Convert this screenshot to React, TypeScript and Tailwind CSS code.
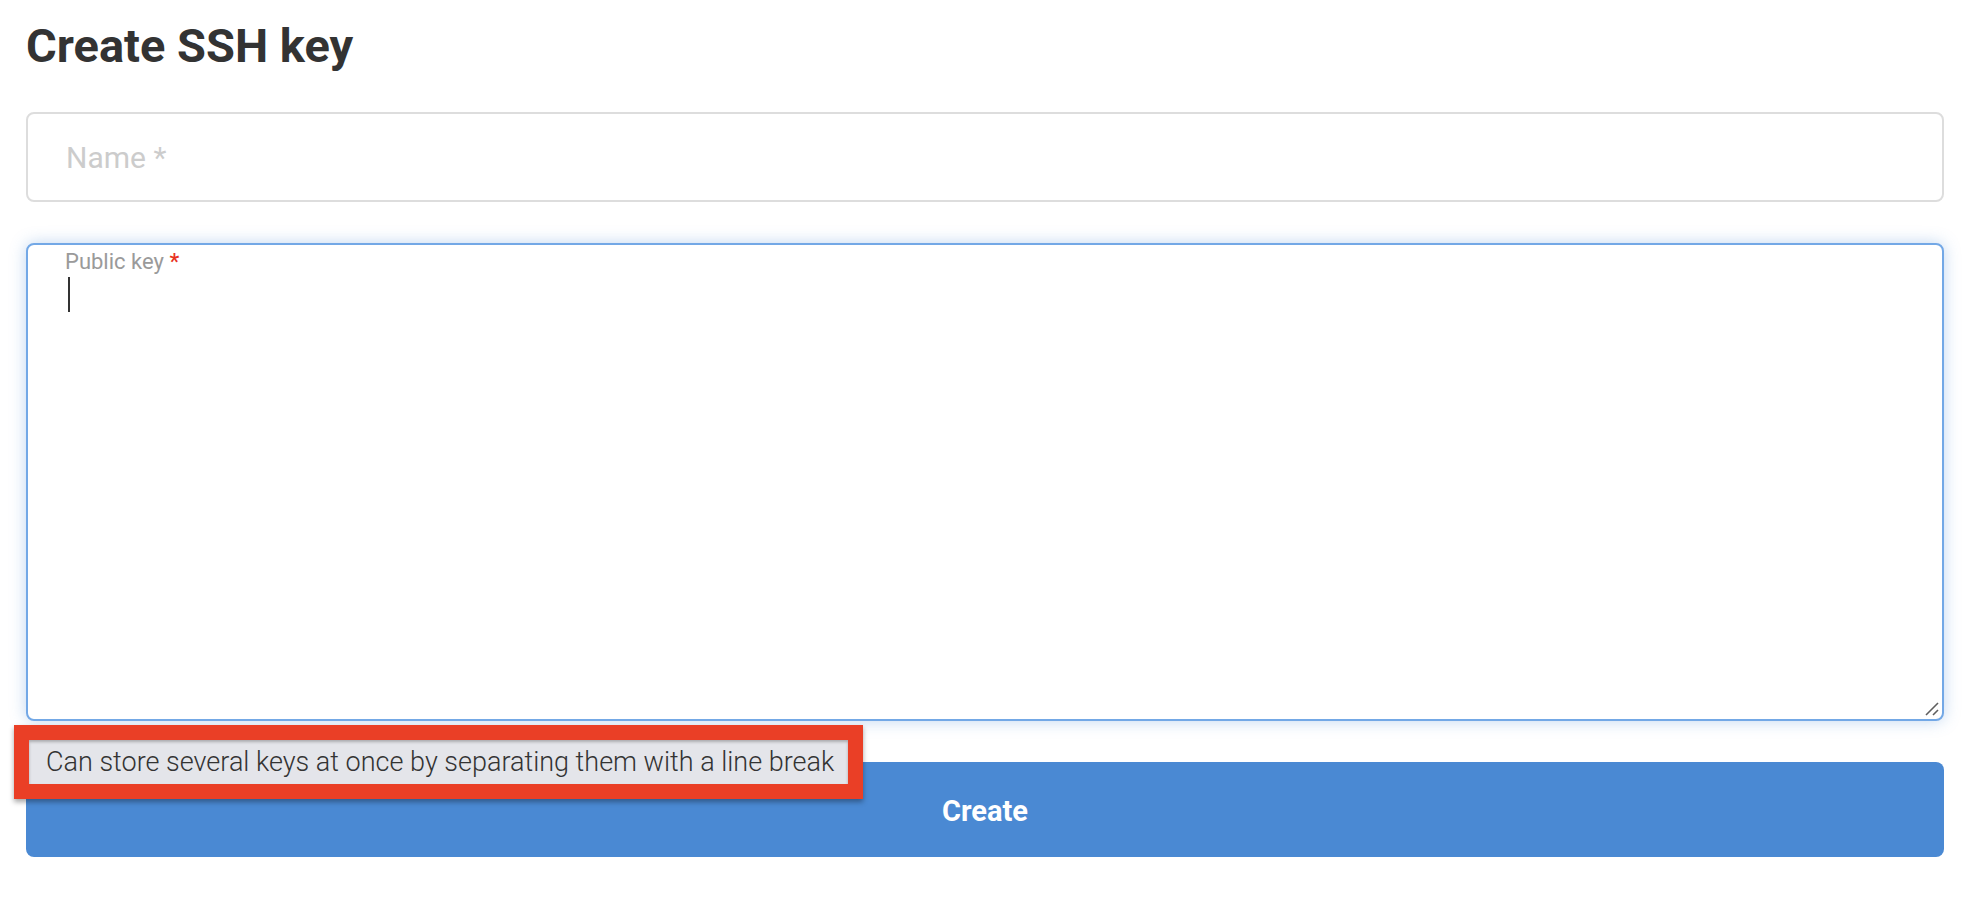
import { useState } from 'react';

// Small drag grip that sits in the lower right corner of the textarea
const ResizeGrip = () => (
  <svg width="16" height="16" viewBox="0 0 16 16" className="absolute right-[2px] bottom-[2px]">
    <line x1="2" y1="14" x2="14" y2="2" stroke="#5f5f5f" strokeWidth="1.6" />
    <line x1="9" y1="14" x2="14" y2="9" stroke="#5f5f5f" strokeWidth="1.6" />
  </svg>
);

export default function App() {
  const [name, setName] = useState('');

  return (
    <div className="min-h-screen bg-white pl-[26px] pr-[42px] font-['Roboto','Liberation_Sans',sans-serif] text-[#333]">
      <h1 className="pt-[17px] text-[47px] leading-[58px] font-bold text-[#333]">Create SSH key</h1>

      {/* Name field */}
      <input
        value={name}
        onChange={e => setName(e.target.value)}
        placeholder="Name *"
        className="mt-[37px] block w-full h-[90px] border-2 border-[#dddddd] rounded-[8px] pl-[38px] text-[30px] text-[#333] placeholder:text-[#cccccc] outline-none"
      />

      {/* Public key field, focused */}
      <div className="relative mt-[41px]">
        <div className="relative h-[478px] border-2 border-[#73a8e6] rounded-[8px] bg-white shadow-[0_0_16px_rgba(74,137,211,0.35)] pl-[37px] pt-[4px]">
          <div className="text-[22px] leading-[26px] text-[#9a9a9a]">
            Public key <span className="text-[#e8321f] font-medium">*</span>
          </div>
          <div className="mt-[2px] ml-[3px] w-[2px] h-[35px] bg-[#333]" />
          <ResizeGrip />
        </div>

        {/* Hint tooltip */}
        <div className="absolute left-[-12px] top-[482px] z-10 w-[849px] h-[74px] border-[15px] border-[#ea3f26] bg-[#e4e5ea] shadow-[0_3px_5px_rgba(0,0,0,0.35)]">
          <div className="h-full pl-[17px] pt-[1px] text-[27px] leading-[42px] font-light text-[#333] whitespace-nowrap shadow-[inset_0_2px_3px_rgba(0,0,0,0.25)]">
            Can store several keys at once by separating them with a line break
          </div>
        </div>
      </div>

      <button className="mt-[41px] block w-full h-[95px] rounded-[8px] bg-[#4a89d3] pt-[4px] text-[29px] font-bold text-white">
        Create
      </button>
    </div>
  );
}
